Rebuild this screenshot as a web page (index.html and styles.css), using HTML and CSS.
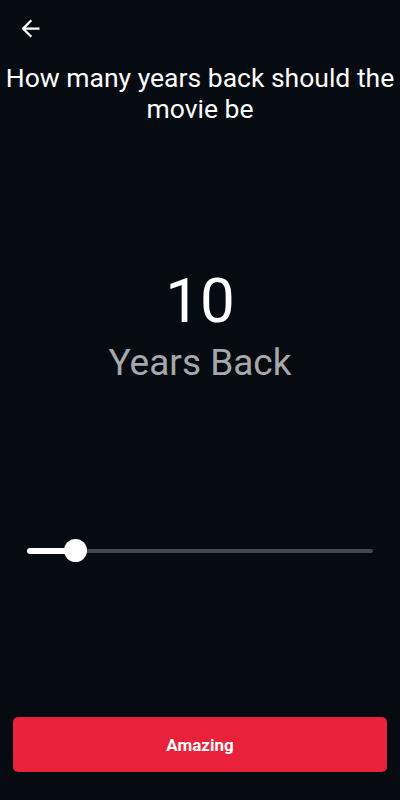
FILE: index.html
```html
<!DOCTYPE html>
<html>
<head>
<meta charset="utf-8">
<link rel="stylesheet" href="styles.css">
</head>
<body>
<div class="screen">
  <header class="topbar">
    <button class="back" aria-label="Back">
      <svg viewBox="0 0 24 24" width="27" height="27"><path d="M20 11H7.83l5.59-5.59L12 4l-8 8 8 8 1.41-1.41L7.83 13H20v-2z" fill="#fff"/></svg>
    </button>
  </header>
  <h1 class="title">How many years back should the movie be</h1>
  <div class="value">
    <div class="number">10</div>
    <div class="label">Years Back</div>
  </div>
  <div class="slider">
    <div class="track">
      <div class="active" style="width: 49px"></div>
      <div class="thumb"></div>
    </div>
  </div>
  <div class="spacer"></div>
  <button class="cta">Amazing</button>
</div>
</body>
</html>
```
FILE: styles.css
```css
* { box-sizing: border-box; }
html, body {
  margin: 0;
  padding: 0;
  background: #060b12;
  font-family: Roboto, "Noto Sans", sans-serif;
}
.screen {
  width: 400px;
  height: 800px;
  display: flex;
  flex-direction: column;
  color: #fff;
}
.topbar {
  height: 56px;
  display: flex;
  align-items: center;
  padding-left: 17px;
}
.back {
  background: none;
  border: 0;
  padding: 0;
  width: 27px;
  height: 27px;
  display: flex;
}
.title {
  margin: 0;
  font-weight: 400;
  font-size: 26.5px;
  line-height: 31px;
  text-align: center;
  padding: 6px 0 0;
}
.value {
  margin-top: 144px;
  display: flex;
  flex-direction: column;
  align-items: center;
}
.number {
  font-size: 62px;
  line-height: 66px;
}
.label {
  font-size: 37px;
  line-height: 42px;
  color: #a6a8ab;
  margin-top: 8px;
}
.slider {
  margin-top: 165px;
  padding: 0 27px;
}
.track {
  position: relative;
  height: 4px;
  border-radius: 2px;
  background: #45484c;
}
.active {
  position: absolute;
  left: 0;
  top: -1px;
  height: 6px;
  border-radius: 3px;
  background: #fff;
}
.thumb {
  position: absolute;
  left: 37px;
  top: -10px;
  width: 23px;
  height: 23px;
  border-radius: 50%;
  background: #fff;
}
.spacer { flex: 1; }
.cta {
  margin: 0 13px 28px;
  height: 55px;
  border: 0;
  border-radius: 5px;
  background: #e8223a;
  color: #fff;
  font-family: Roboto, "Noto Sans", sans-serif;
  font-weight: 700;
  font-size: 17px;
}
```
